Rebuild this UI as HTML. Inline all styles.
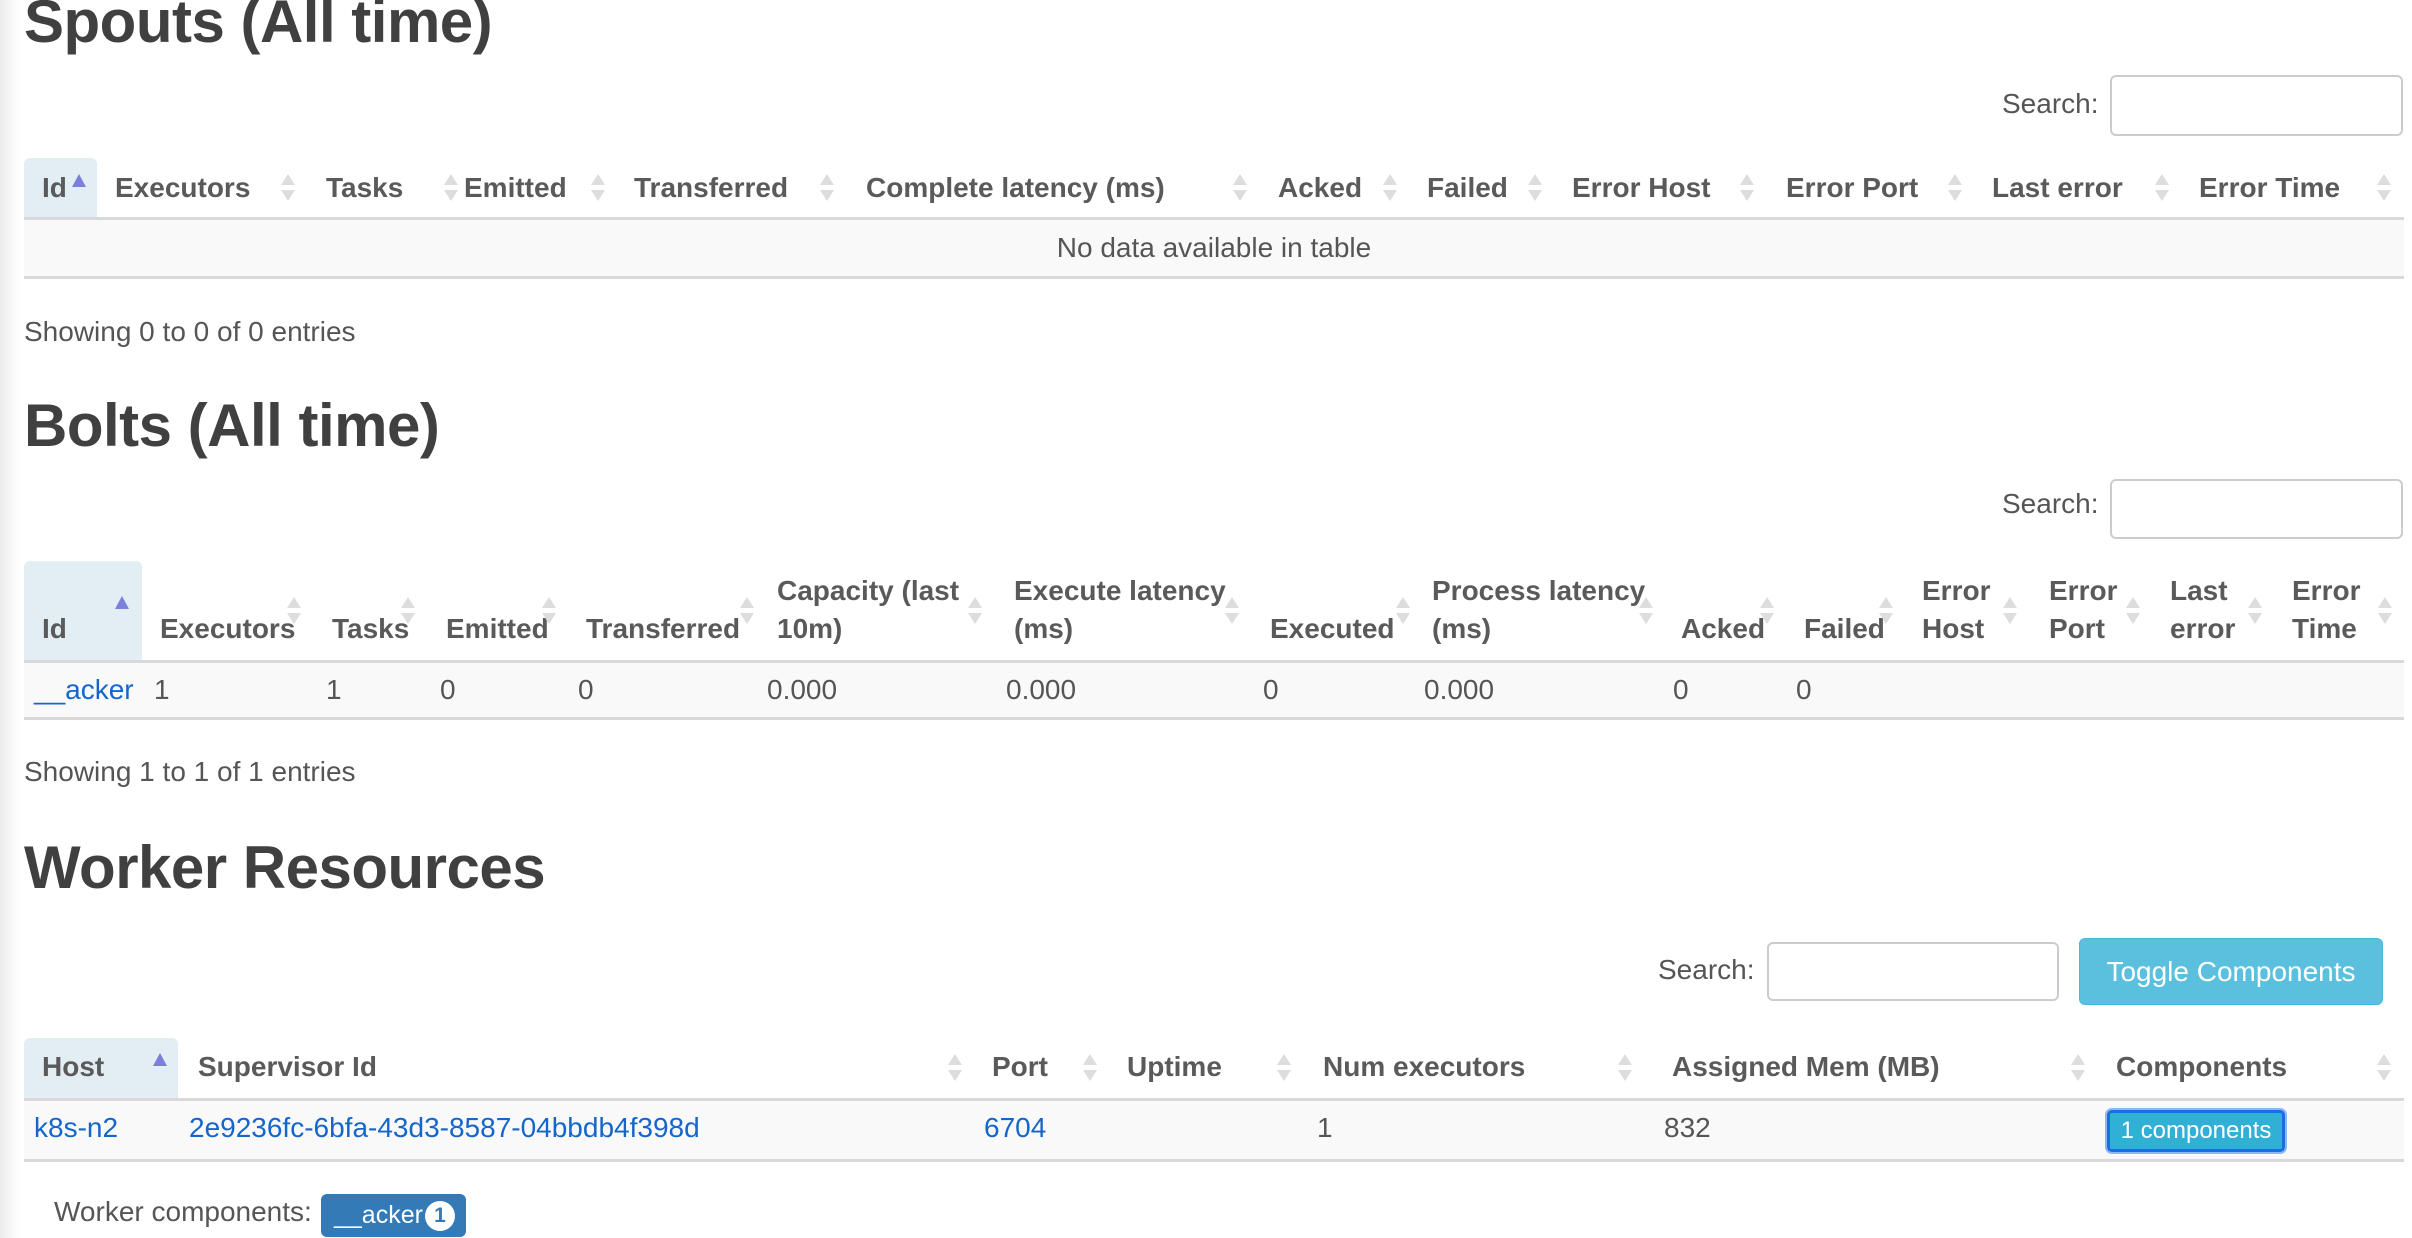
<!DOCTYPE html>
<html><head><meta charset="utf-8">
<style>
html,body{margin:0;padding:0}
body{width:2412px;height:1238px;position:relative;overflow:hidden;background:#fff;font-family:"Liberation Sans",Arial,sans-serif;color:#555}
.edge{position:absolute;left:0;top:0;width:22px;height:1238px;background:linear-gradient(to right,#ececec,#fafafa 60%,#fff)}
.t{position:absolute;white-space:nowrap;line-height:30px;font-size:28px}
.h{font-weight:bold;font-size:28px;color:#5a5a5a}
.a{color:#1466cc}
.hd{position:absolute;left:24px;font-weight:bold;font-size:60px;line-height:60px;color:#404040;white-space:nowrap;letter-spacing:-0.5px}
.s{position:absolute;width:16px;height:28px}
.s:before{content:"";position:absolute;left:1px;top:0;border-left:7px solid transparent;border-right:7px solid transparent;border-bottom:11px solid #ddd}
.s:after{content:"";position:absolute;left:1px;top:16px;border-left:7px solid transparent;border-right:7px solid transparent;border-top:11px solid #ddd}
.up{position:absolute;width:0;height:0;border-left:7px solid transparent;border-right:7px solid transparent;border-bottom:13px solid #7b80db}
.inp{position:absolute;border:2px solid #ccc;border-radius:6px;background:#fff;box-sizing:border-box}
.line{position:absolute;left:24px;width:2380px;height:3px;background:#d9d9d9}
.rowbg{position:absolute;left:24px;width:2380px;background:#f9f9f9}
.idbg{position:absolute;background:#e3edf4;border-radius:6px 6px 0 0}
</style></head><body>
<div class="edge"></div>

<!-- Spouts -->
<div class="hd" style="top:-8px">Spouts (All time)</div>
<div class="t" style="left:2002px;top:89px">Search:</div>
<div class="inp" style="left:2110px;top:75px;width:293px;height:61px"></div>
<div class="idbg" style="left:24px;top:158px;width:73px;height:60px"></div>
<div class="up" style="left:72px;top:174px"></div>
<div class="t h" style="left:42px;top:173px">Id</div>
<div class="t h" style="left:115px;top:173px">Executors</div>
<div class="t h" style="left:326px;top:173px">Tasks</div>
<div class="t h" style="left:464px;top:173px">Emitted</div>
<div class="t h" style="left:634px;top:173px">Transferred</div>
<div class="t h" style="left:866px;top:173px">Complete latency (ms)</div>
<div class="t h" style="left:1278px;top:173px">Acked</div>
<div class="t h" style="left:1427px;top:173px">Failed</div>
<div class="t h" style="left:1572px;top:173px">Error Host</div>
<div class="t h" style="left:1786px;top:173px">Error Port</div>
<div class="t h" style="left:1992px;top:173px">Last error</div>
<div class="t h" style="left:2199px;top:173px">Error Time</div>
<div class="s" style="left:280px;top:174px"></div>
<div class="s" style="left:443px;top:174px"></div>
<div class="s" style="left:590px;top:174px"></div>
<div class="s" style="left:819px;top:174px"></div>
<div class="s" style="left:1232px;top:174px"></div>
<div class="s" style="left:1382px;top:174px"></div>
<div class="s" style="left:1527px;top:174px"></div>
<div class="s" style="left:1739px;top:174px"></div>
<div class="s" style="left:1947px;top:174px"></div>
<div class="s" style="left:2154px;top:174px"></div>
<div class="s" style="left:2376px;top:174px"></div>
<div class="rowbg" style="top:218px;height:59px"></div>
<div class="line" style="top:217px"></div>
<div class="line" style="top:276px"></div>
<div class="t" style="left:0;width:2428px;text-align:center;top:233px">No data available in table</div>
<div class="t" style="left:24px;top:317px">Showing 0 to 0 of 0 entries</div>

<!-- Bolts -->
<div class="hd" style="top:396px">Bolts (All time)</div>
<div class="t" style="left:2002px;top:489px">Search:</div>
<div class="inp" style="left:2110px;top:479px;width:293px;height:60px"></div>
<div class="idbg" style="left:24px;top:561px;width:118px;height:100px"></div>
<div class="up" style="left:115px;top:596px"></div>
<div class="t h" style="left:42px;top:614px">Id</div>
<div class="t h" style="left:160px;top:614px">Executors</div>
<div class="t h" style="left:332px;top:614px">Tasks</div>
<div class="t h" style="left:446px;top:614px">Emitted</div>
<div class="t h" style="left:586px;top:614px">Transferred</div>
<div class="t h" style="left:777px;top:576px">Capacity (last</div>
<div class="t h" style="left:777px;top:614px">10m)</div>
<div class="t h" style="left:1014px;top:576px">Execute latency</div>
<div class="t h" style="left:1014px;top:614px">(ms)</div>
<div class="t h" style="left:1270px;top:614px">Executed</div>
<div class="t h" style="left:1432px;top:576px">Process latency</div>
<div class="t h" style="left:1432px;top:614px">(ms)</div>
<div class="t h" style="left:1681px;top:614px">Acked</div>
<div class="t h" style="left:1804px;top:614px">Failed</div>
<div class="t h" style="left:1922px;top:576px">Error</div>
<div class="t h" style="left:1922px;top:614px">Host</div>
<div class="t h" style="left:2049px;top:576px">Error</div>
<div class="t h" style="left:2049px;top:614px">Port</div>
<div class="t h" style="left:2170px;top:576px">Last</div>
<div class="t h" style="left:2170px;top:614px">error</div>
<div class="t h" style="left:2292px;top:576px">Error</div>
<div class="t h" style="left:2292px;top:614px">Time</div>
<div class="s" style="left:286px;top:597px"></div>
<div class="s" style="left:400px;top:597px"></div>
<div class="s" style="left:541px;top:597px"></div>
<div class="s" style="left:739px;top:597px"></div>
<div class="s" style="left:967px;top:597px"></div>
<div class="s" style="left:1224px;top:597px"></div>
<div class="s" style="left:1395px;top:597px"></div>
<div class="s" style="left:1638px;top:597px"></div>
<div class="s" style="left:1759px;top:597px"></div>
<div class="s" style="left:1878px;top:597px"></div>
<div class="s" style="left:2002px;top:597px"></div>
<div class="s" style="left:2125px;top:597px"></div>
<div class="s" style="left:2247px;top:597px"></div>
<div class="s" style="left:2377px;top:597px"></div>
<div class="rowbg" style="top:661px;height:57px"></div>
<div class="line" style="top:660px"></div>
<div class="line" style="top:717px"></div>
<div class="t a" style="left:34px;top:675px">__acker</div>
<div class="t" style="left:154px;top:675px">1</div>
<div class="t" style="left:326px;top:675px">1</div>
<div class="t" style="left:440px;top:675px">0</div>
<div class="t" style="left:578px;top:675px">0</div>
<div class="t" style="left:767px;top:675px">0.000</div>
<div class="t" style="left:1006px;top:675px">0.000</div>
<div class="t" style="left:1263px;top:675px">0</div>
<div class="t" style="left:1424px;top:675px">0.000</div>
<div class="t" style="left:1673px;top:675px">0</div>
<div class="t" style="left:1796px;top:675px">0</div>
<div class="t" style="left:24px;top:757px">Showing 1 to 1 of 1 entries</div>

<!-- Worker Resources -->
<div class="hd" style="top:838px">Worker Resources</div>
<div class="t" style="left:1658px;top:955px">Search:</div>
<div class="inp" style="left:1767px;top:942px;width:292px;height:59px"></div>
<div style="position:absolute;left:2079px;top:938px;width:304px;height:67px;background:#5bc0de;border:1px solid #46b8da;box-sizing:border-box;border-radius:6px;color:#fff;font-size:28px;line-height:65px;text-align:center">Toggle Components</div>
<div class="idbg" style="left:24px;top:1038px;width:154px;height:61px"></div>
<div class="up" style="left:153px;top:1053px"></div>
<div class="t h" style="left:42px;top:1052px">Host</div>
<div class="t h" style="left:198px;top:1052px">Supervisor Id</div>
<div class="t h" style="left:992px;top:1052px">Port</div>
<div class="t h" style="left:1127px;top:1052px">Uptime</div>
<div class="t h" style="left:1323px;top:1052px">Num executors</div>
<div class="t h" style="left:1672px;top:1052px">Assigned Mem (MB)</div>
<div class="t h" style="left:2116px;top:1052px">Components</div>
<div class="s" style="left:947px;top:1054px"></div>
<div class="s" style="left:1082px;top:1054px"></div>
<div class="s" style="left:1276px;top:1054px"></div>
<div class="s" style="left:1617px;top:1054px"></div>
<div class="s" style="left:2070px;top:1054px"></div>
<div class="s" style="left:2376px;top:1054px"></div>
<div class="rowbg" style="top:1099px;height:61px"></div>
<div class="line" style="top:1098px"></div>
<div class="line" style="top:1159px"></div>
<div class="t a" style="left:34px;top:1113px">k8s-n2</div>
<div class="t a" style="left:189px;top:1113px">2e9236fc-6bfa-43d3-8587-04bbdb4f398d</div>
<div class="t a" style="left:984px;top:1113px">6704</div>
<div class="t" style="left:1317px;top:1113px">1</div>
<div class="t" style="left:1664px;top:1113px">832</div>
<div style="position:absolute;left:2107px;top:1110px;width:178px;height:42px;background:#31b0d5;border:3px solid #1a6fe0;box-shadow:0 0 0 2px #8fb6f2;box-sizing:border-box;border-radius:5px;color:#fff;font-size:24px;line-height:36px;text-align:center;white-space:nowrap">1 components</div>
<div class="t" style="left:54px;top:1197px">Worker components:</div>
<div style="position:absolute;left:321px;top:1194px;width:145px;height:43px;background:#337ab7;border-radius:6px;color:#fff;font-size:25px;line-height:43px;padding-left:13px;box-sizing:border-box;white-space:nowrap">__acker<span style="display:inline-block;margin-left:2px;width:30px;height:30px;border-radius:15px;background:#fff;color:#337ab7;font-weight:bold;font-size:21px;line-height:30px;text-align:center;vertical-align:middle">1</span></div>
</body></html>
